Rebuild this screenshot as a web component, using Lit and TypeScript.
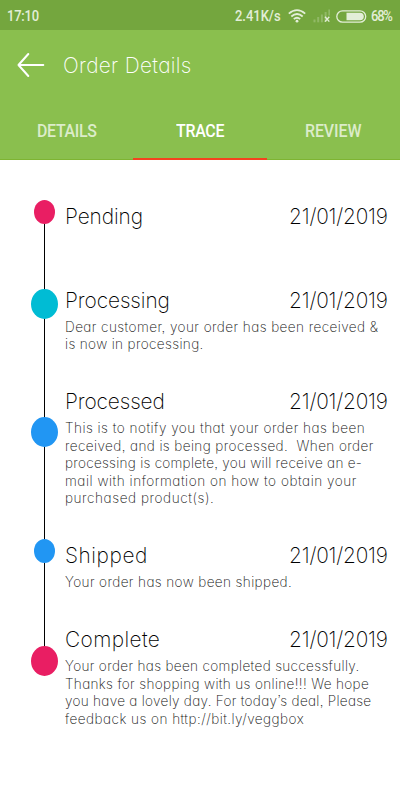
import { LitElement, html, css, svg } from "lit";
import { customElement, property } from "lit/decorators.js";

/** One line of condensed text, tracked to fill a given width. */
@customElement("tracked-line")
class TrackedLine extends LitElement {
  @property() text = "";
  @property({ type: Number }) span = 0;
  static styles = css`
    :host { display: block; white-space: pre; flex: none; }
    .ink { display: inline-block; transform: scaleX(var(--squeeze, 0.97)); transform-origin: 0 50%; }
  `;
  render() {
    return html`<span class="ink">${this.text}</span>`;
  }
  updated() {
    const ink = this.renderRoot.querySelector(".ink") as HTMLElement;
    ink.style.letterSpacing = "0px";
    const squeeze = parseFloat(getComputedStyle(this).getPropertyValue("--squeeze")) || 0.97;
    const gap = (this.span / squeeze - ink.offsetWidth) / Math.max(1, this.text.length - 1);
    ink.style.letterSpacing = gap.toFixed(3) + "px";
    this.style.width = this.span + "px";
  }
}

type Line = [string, number];
interface Step {
  title: Line;
  tone: string;
  lines: Line[];
}

const steps: Step[] = [
  { title: ["Pending", 78], tone: "pink small", lines: [["", 0]] },
  {
    title: ["Processing", 105],
    tone: "cyan",
    lines: [
      ["Dear customer, your order has been received &", 313],
      ["is now in processing.", 138],
    ],
  },
  {
    title: ["Processed", 100],
    tone: "blue",
    lines: [
      ["This is to notify you that your order has been", 300],
      ["received, and is being processed.  When order", 308],
      ["processing is complete, you will receive an e-", 297],
      ["mail with information on how to obtain your", 291],
      ["purchased product(s).", 149],
    ],
  },
  { title: ["Shipped", 82], tone: "blue small", lines: [["Your order has now been shipped.", 227]] },
  {
    title: ["Complete", 95],
    tone: "pink",
    lines: [
      ["Your order has been completed successfully.", 294],
      ["Thanks for shopping with us online!!! We hope", 304],
      ["you have a lovely day. For today’s deal, Please", 306],
      ["feedback us on http://bit.ly/veggbox", 239],
    ],
  },
];

@customElement("app-root")
class AppRoot extends LitElement {
  static styles = css`
    :host { display: block; width: 400px; height: 800px; background: #fff; overflow: hidden; font-family: Inter, "Open Sans", sans-serif; }
    .status { box-sizing: border-box; height: 30px; padding: 2px 7px 0; background: #74a63e; color: #e3eed8; display: flex; align-items: center; font: 500 13.8px/28px Roboto, sans-serif; --squeeze: 0.94; }
    .grow { flex: 1; }
    .wifi { margin-left: 7px; }
    .signal { margin-left: 7px; }
    .battery { margin: 0 4px 0 6px; }
    .bar { box-sizing: border-box; height: 70px; background: #8abf4e; display: flex; align-items: center; padding-left: 17px; color: #fff; }
    .back { margin-right: 18px; }
    .heading { font-size: 21.5px; font-weight: 200; line-height: 30px; font-feature-settings: "cv11", "ss03"; }
    .tabs { box-sizing: border-box; height: 60px; background: #8abf4e; border-bottom: 1px solid #7eb432; display: grid; grid-template-columns: 1fr 1fr 1fr; }
    .tab { display: flex; justify-content: center; padding-top: 19px; font: 500 17.5px/24px Roboto, sans-serif; color: #dcecca; --squeeze: 0.91; box-sizing: border-box; height: 60px; }
    .active { color: #fff; border-bottom: 2.5px solid #f4431f; }
    .trace { padding-top: 9.6px; }
    .step { display: grid; grid-template-columns: 65px 1fr; }
    .rail { position: relative; display: flex; align-items: center; padding-left: 31px; }
    .rail::before { content: ""; position: absolute; left: 44px; top: 0; bottom: 0; width: 1px; background: #000; }
    .step:first-child .rail::before { top: 50%; }
    .step:last-child .rail::before { bottom: 50%; }
    .dot { position: relative; width: 27px; height: 30px; border-radius: 50%; }
    .small { width: 21px; height: 24px; margin-left: 3px; }
    .pink { background: #e91e63; }
    .cyan { background: #00bcd4; }
    .blue { background: #2196f3; }
    .body { padding: 31px 12px 2px 0; color: #000; font-weight: 200; font-feature-settings: "cv11", "ss03"; }
    .head { display: flex; justify-content: space-between; font-size: 21.5px; line-height: 30.4px; margin-bottom: 3px; }
    .line { height: 17.5px; font-size: 14px; line-height: 17.5px; font-weight: 250; color: #111; }
  `;

  render() {
    return html`
      <div class="status">
        <tracked-line text="17:10" .span=${32}></tracked-line>
        <span class="grow"></span>
        <tracked-line text="2.41K/s" .span=${46}></tracked-line>
        <svg class="wifi" width="18" height="14" viewBox="0 0 18 14" fill="none" stroke="#e3eed8" stroke-width="1.8">
          <path d="M.8 4.6Q9-2.4 17.2 4.6M3.3 7.5Q9 2.4 14.7 7.5M5.8 10.2Q9 7.3 12.2 10.2" />
          <circle cx="9" cy="12.2" r="1.4" fill="#e3eed8" stroke="none" />
        </svg>
        <svg class="signal" width="17" height="14" viewBox="0 0 17 14">
          ${[0, 1, 2, 3, 4].map((i) => svg`<rect x=${0.5 + i * 3.7} y=${10.5 - i * 2.5} width="2" height=${i === 4 ? 6 : i === 3 ? 10 : 2.8 + i * 2.5} fill="#91b966"/>`)}
          <path d="M12 7.8l4.3 4.8M16.3 7.8l-4.3 4.8" stroke="#e3eed8" stroke-width="1.4" />
        </svg>
        <svg class="battery" width="31" height="13" viewBox="0 0 31 13">
          <rect x=".8" y=".8" width="28.9" height="11.4" rx="5.7" fill="none" stroke="#e3eed8" stroke-width="1.3" />
          <path d="M10.5 2.7H24a3.8 3.8 0 0 1 0 7.6H10.5z" fill="#e3eed8" />
        </svg>
        <tracked-line text="68%" .span=${22}></tracked-line>
      </div>
      <div class="bar">
        <svg class="back" width="28" height="26" viewBox="0 0 28 26" fill="none" stroke="#fff" stroke-width="2" stroke-linecap="round" stroke-linejoin="round">
          <path d="M26.3 13H1.5M11.3 2L1.5 13l9.8 11" />
        </svg>
        <tracked-line class="heading" text="Order Details" .span=${128}></tracked-line>
      </div>
      <div class="tabs">
        <div class="tab"><tracked-line text="DETAILS" .span=${60}></tracked-line></div>
        <div class="tab active"><tracked-line text="TRACE" .span=${48}></tracked-line></div>
        <div class="tab"><tracked-line text="REVIEW" .span=${56}></tracked-line></div>
      </div>
      <div class="trace">
        ${steps.map(
          (s) => html`<div class="step">
            <div class="rail"><span class="dot ${s.tone}"></span></div>
            <div class="body">
              <div class="head">
                <tracked-line .text=${s.title[0]} .span=${s.title[1]}></tracked-line>
                <tracked-line text="21/01/2019" .span=${99}></tracked-line>
              </div>
              ${s.lines.map(([t, w]) => html`<tracked-line class="line" .text=${t} .span=${w}></tracked-line>`)}
            </div>
          </div>`
        )}
      </div>
    `;
  }
}
